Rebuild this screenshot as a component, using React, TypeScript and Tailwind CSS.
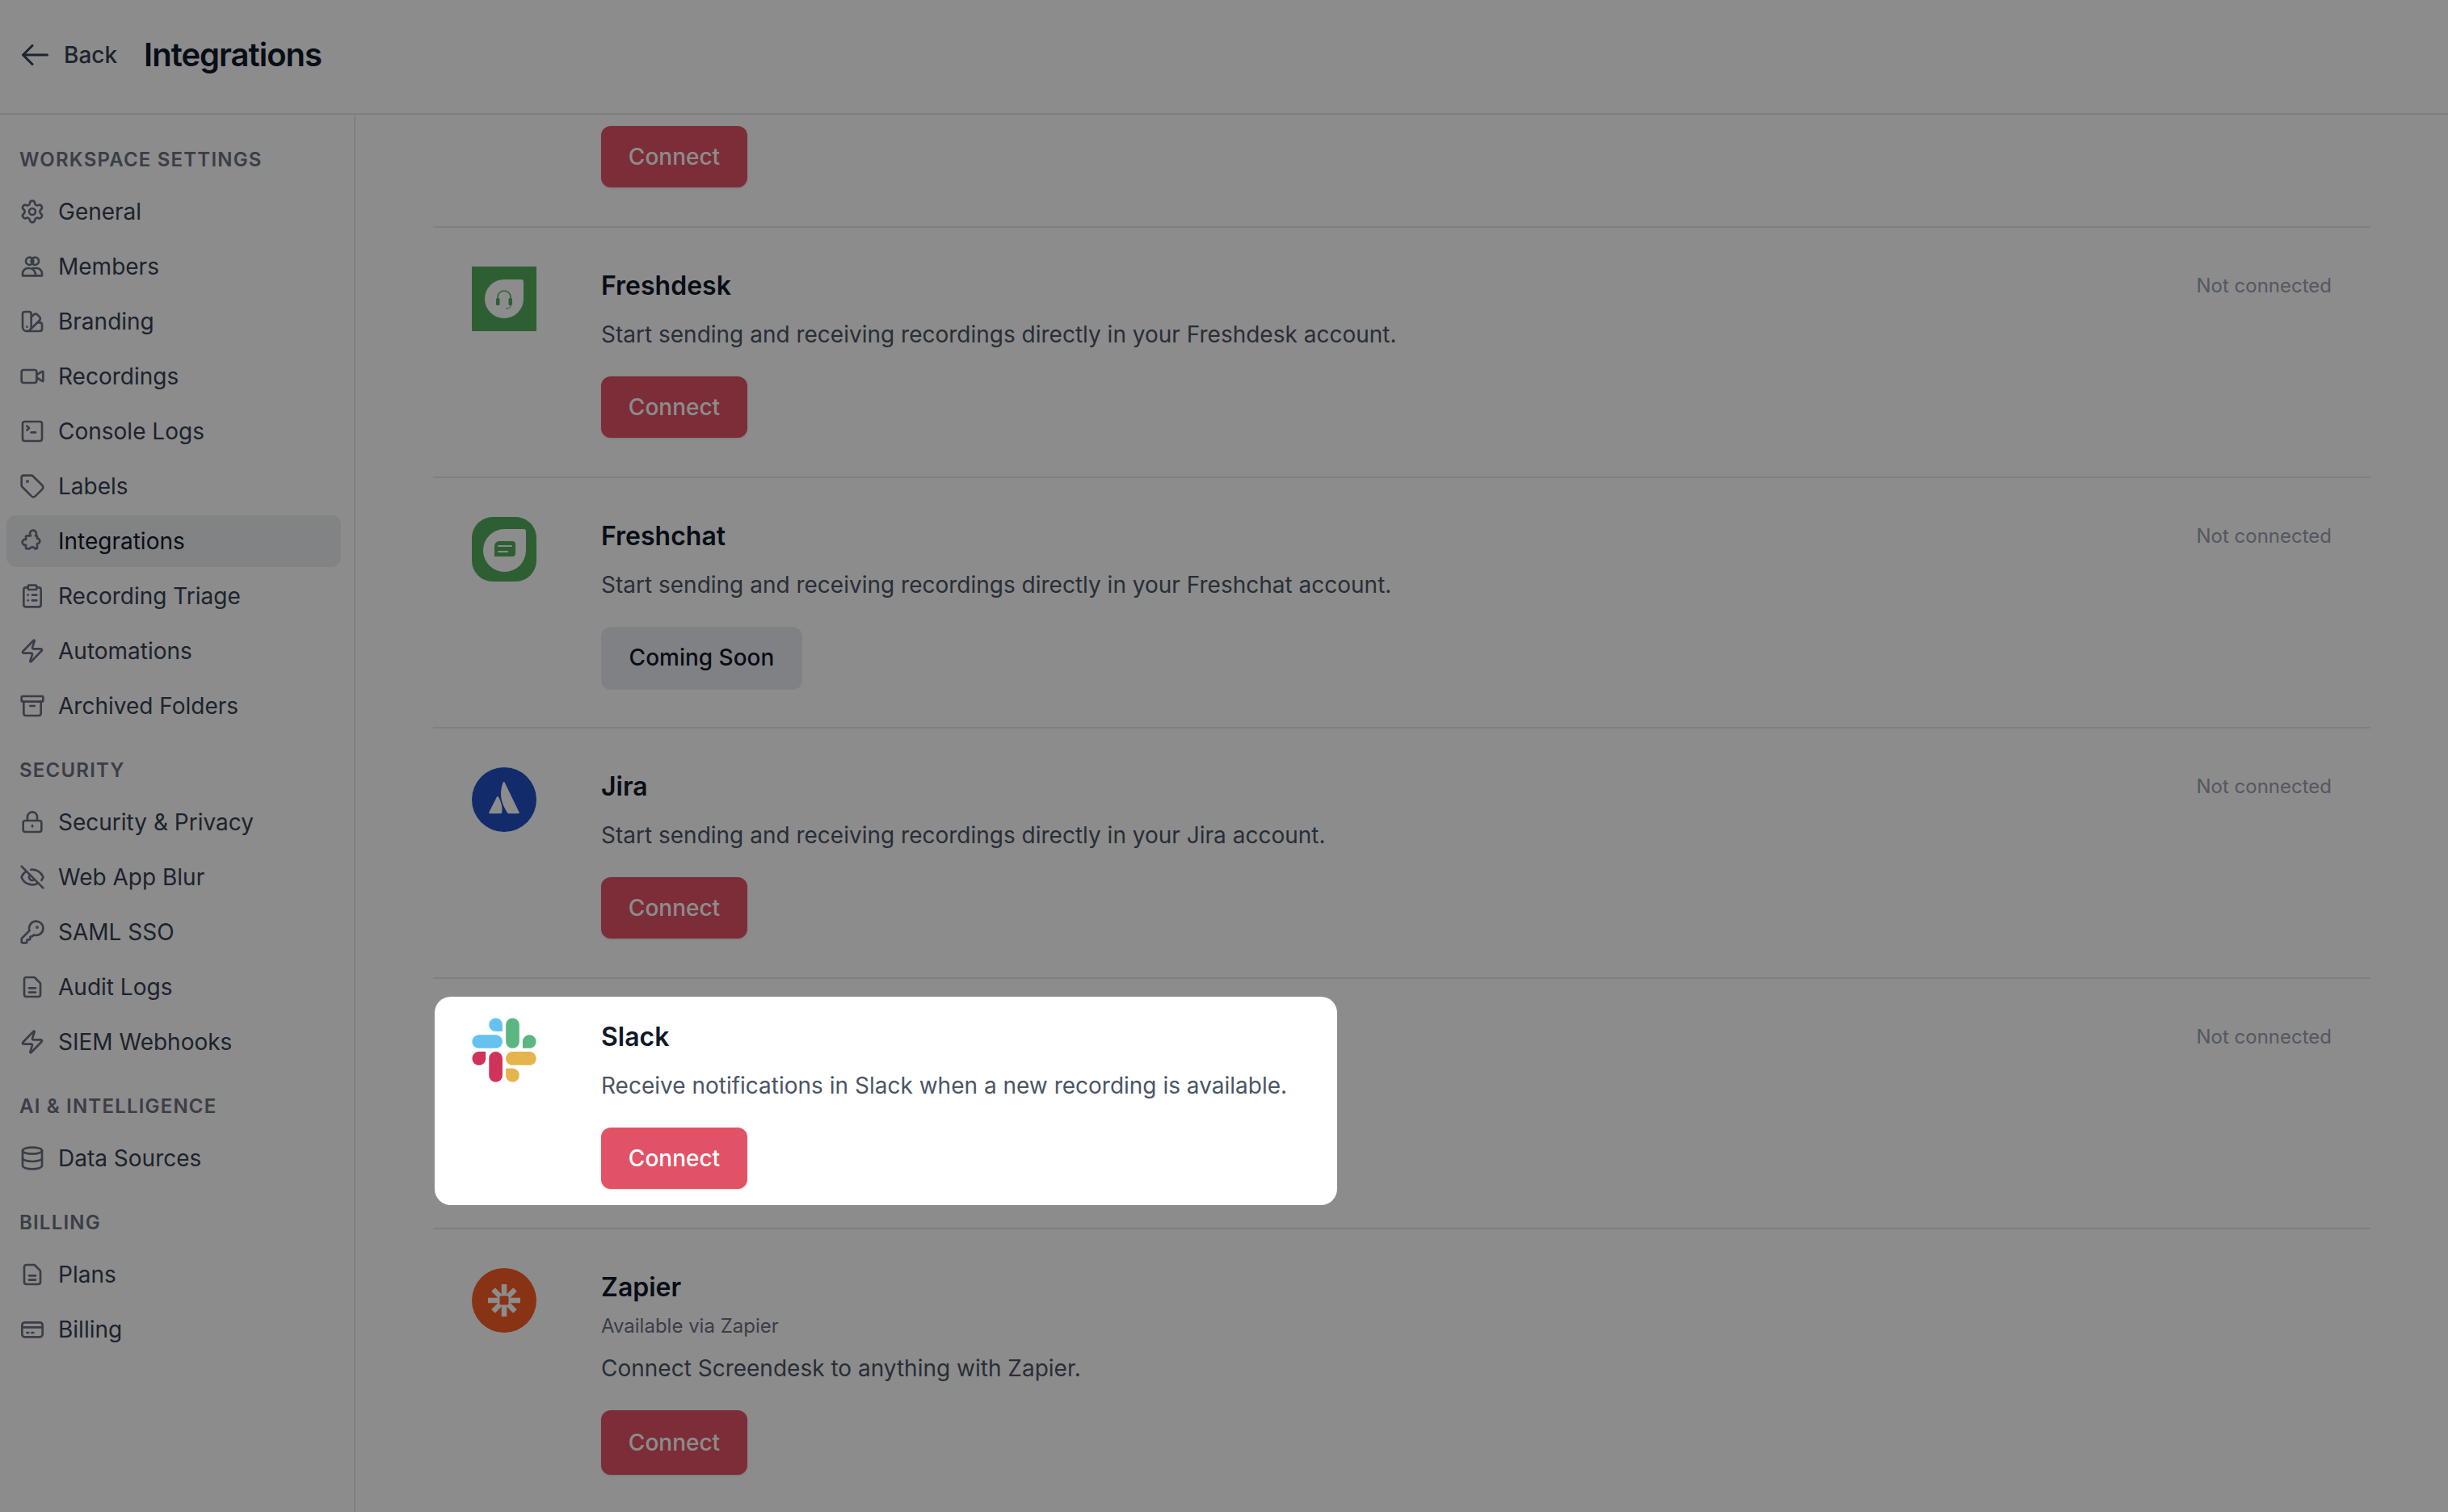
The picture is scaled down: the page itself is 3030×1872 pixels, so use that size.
import type { ReactNode } from "react";
import {
  Archive,
  ClipboardList,
  Database,
  EyeOff,
  Settings,
  SquareTerminal,
  SwatchBook,
  Tag,
  Video,
  Zap,
  KeyRound,
} from "lucide-react";

type IconProps = { className?: string };

const Svg = ({ className, children }: IconProps & { children: ReactNode }) => (
  <svg
    viewBox="0 0 24 24"
    fill="none"
    stroke="currentColor"
    strokeWidth="2"
    strokeLinecap="round"
    strokeLinejoin="round"
    className={className}
  >
    {children}
  </svg>
);

const MembersIcon = ({ className }: IconProps) => (
  <Svg className={className}>
    <circle cx="9.5" cy="7" r="3.5" />
    <circle cx="14.5" cy="7" r="3.5" />
    <path d="M3 20.500v-2a5 5 0 0 1 5-5h1a6 6 0 0 1 6 6v1z" />
    <path d="M15 20.500h6v-2a5 5 0 0 0-5-5h-3.500" />
  </Svg>
);

const PuzzleIcon = ({ className }: IconProps) => (
  <Svg className={className}>
    <path d="M7 7h3.500a3 3 0 1 1 4.500 0h.5a1 1 0 0 1 1 1v1.500a2.500 2.500 0 0 1 0 5V18a1 1 0 0 1-1 1h-1.200a2.500 2.500 0 0 0-4.600 0H7a1 1 0 0 1-1-1v-2.500a2.600 2.600 0 1 1 0-5V8a1 1 0 0 1 1-1z" />
  </Svg>
);

const LockIcon = ({ className }: IconProps) => (
  <Svg className={className}>
    <rect x="3.500" y="10.500" width="17" height="10.500" rx="2" />
    <path d="M7.500 10.500V7a4.500 4.500 0 0 1 9 0v3.500" />
    <path d="M12 15v1" />
  </Svg>
);

const FileIcon = ({ className }: IconProps) => (
  <Svg className={className}>
    <path d="M14 3H6.500A2 2 0 0 0 4.500 5v14a2 2 0 0 0 2 2h11a2 2 0 0 0 2-2V8.500z" />
    <path d="M9 13h6" />
    <path d="M9 17h6" />
  </Svg>
);

const CardIcon = ({ className }: IconProps) => (
  <Svg className={className}>
    <rect x="2.500" y="5.500" width="19" height="13.500" rx="2.500" />
    <path d="M2.500 10h19" />
    <path d="M7 15h1.500" />
    <path d="M11.500 15h1.500" />
  </Svg>
);

const sections = [
  {
    title: "Workspace Settings",
    items: [
      { label: "General", icon: Settings },
      { label: "Members", icon: MembersIcon },
      { label: "Branding", icon: SwatchBook },
      { label: "Recordings", icon: Video },
      { label: "Console Logs", icon: SquareTerminal },
      { label: "Labels", icon: Tag },
      { label: "Integrations", icon: PuzzleIcon, active: true },
      { label: "Recording Triage", icon: ClipboardList },
      { label: "Automations", icon: Zap },
      { label: "Archived Folders", icon: Archive },
    ],
  },
  {
    title: "Security",
    items: [
      { label: "Security & Privacy", icon: LockIcon },
      { label: "Web App Blur", icon: EyeOff },
      { label: "SAML SSO", icon: KeyRound },
      { label: "Audit Logs", icon: FileIcon },
      { label: "SIEM Webhooks", icon: Zap },
    ],
  },
  {
    title: "AI & Intelligence",
    items: [{ label: "Data Sources", icon: Database }],
  },
  {
    title: "Billing",
    items: [
      { label: "Plans", icon: FileIcon },
      { label: "Billing", icon: CardIcon },
    ],
  },
];

const FreshdeskLogo = () => (
  <svg viewBox="0 0 80 80" className="h-20 w-20">
    <rect width="80" height="80" fill="#52ad5e" />
    <path d="M40 16h21a3 3 0 0 1 3 3v21a24 24 0 1 1-24-24z" fill="#fff" />
    <path d="M32 44v-6a8 8 0 0 1 16 0v6" fill="none" stroke="#52ad5e" strokeWidth="1.500" />
    <rect x="30" y="39" width="4.500" height="9" rx="1.500" fill="#52ad5e" />
    <rect x="45.500" y="39" width="4.500" height="9" rx="1.500" fill="#52ad5e" />
    <path d="M48 48c0 3-2 4-6 4" fill="none" stroke="#52ad5e" strokeWidth="1" />
  </svg>
);

const FreshchatLogo = () => (
  <svg viewBox="0 0 80 80" className="h-20 w-20">
    <rect width="80" height="80" rx="26" fill="#52ad5e" />
    <path d="M40 15h24a3 3 0 0 1 3 3v24a26.500 26.500 0 1 1-27-27z" fill="#fff" />
    <path d="M34 30h16a4 4 0 0 1 4 4v11a4 4 0 0 1-4 4H28V36a6 6 0 0 1 6-6z" fill="#52ad5e" />
    <path d="M33 36h16" stroke="#fff" strokeWidth="2" strokeLinecap="round" />
    <path d="M33 43h11" stroke="#fff" strokeWidth="2" strokeLinecap="round" />
  </svg>
);

const JiraLogo = () => (
  <svg viewBox="0 0 80 80" className="h-20 w-20">
    <circle cx="40" cy="40" r="40" fill="#1f4fc4" />
    <path
      d="M38.500 19c.6-1.400 1.700-1.400 2.300 0l17.700 36.500c.5 1-.1 1.800-1.100 1.800H45.500c-.7 0-1.300-.4-1.600-1.100-3.500-7.300-12-17-5.400-37.200z"
      fill="#fff"
    />
    <path
      d="M31 36.500c.6-.8 1.500-.7 2 .2 2.200 4 5.500 11 4.200 19.400-.1.700-.7 1.200-1.400 1.200H22.500c-1 0-1.600-.9-1.100-1.800z"
      fill="#fff"
    />
  </svg>
);

const SlackLogo = () => (
  <svg viewBox="0 0 127 127" className="h-20 w-20">
    <path
      d="M27.200 80c0 7.300-5.900 13.200-13.200 13.200C6.700 93.200.800 87.300.800 80c0-7.300 5.900-13.200 13.200-13.200h13.200V80zm6.600 0c0-7.300 5.900-13.200 13.200-13.200 7.300 0 13.200 5.900 13.200 13.200v33c0 7.300-5.900 13.200-13.200 13.200-7.300 0-13.200-5.900-13.200-13.200V80z"
      fill="#cf3358"
    />
    <path
      d="M47 27c-7.300 0-13.200-5.900-13.200-13.200C33.800 6.500 39.700.600 47 .600c7.300 0 13.200 5.900 13.200 13.200V27H47zm0 6.700c7.300 0 13.200 5.900 13.200 13.200 0 7.300-5.900 13.200-13.200 13.200H13.900C6.600 60.100.700 54.200.700 46.900c0-7.300 5.900-13.200 13.200-13.200H47z"
      fill="#65c2f0"
    />
    <path
      d="M99.900 46.900c0-7.300 5.900-13.200 13.200-13.200 7.300 0 13.200 5.900 13.200 13.200 0 7.300-5.900 13.200-13.200 13.200H99.900V46.900zm-6.600 0c0 7.300-5.900 13.200-13.200 13.200-7.300 0-13.200-5.900-13.200-13.200V13.800C66.900 6.500 72.800.600 80.100.600c7.300 0 13.200 5.900 13.200 13.200v33.100z"
      fill="#5cb681"
    />
    <path
      d="M80.100 99.800c7.300 0 13.200 5.900 13.200 13.200 0 7.300-5.900 13.200-13.200 13.200-7.300 0-13.200-5.900-13.200-13.200V99.800h13.200zm0-6.600c-7.300 0-13.200-5.900-13.200-13.200 0-7.300 5.900-13.200 13.200-13.200h33.100c7.300 0 13.200 5.900 13.200 13.200 0 7.300-5.900 13.200-13.200 13.200H80.100z"
      fill="#e4b44d"
    />
  </svg>
);

const ZapierLogo = () => (
  <svg viewBox="0 0 80 80" className="h-20 w-20">
    <circle cx="40" cy="40" r="40" fill="#f75d26" />
    <g stroke="#fff" strokeWidth="6.500">
      <path d="M20 40h40" />
      <path d="M40 20v40" />
      <path d="M26.500 26.500l27 27" />
      <path d="M53.500 26.500l-27 27" />
    </g>
    <rect x="34.500" y="34.500" width="11" height="11" rx="1.500" fill="#f75d26" />
  </svg>
);

const rows = [
  {
    name: "Freshdesk",
    logo: <FreshdeskLogo />,
    text: "Start sending and receiving recordings directly in your Freshdesk account.",
    status: true,
  },
  {
    name: "Freshchat",
    logo: <FreshchatLogo />,
    text: "Start sending and receiving recordings directly in your Freshchat account.",
    status: true,
    soon: true,
  },
  {
    name: "Jira",
    logo: <JiraLogo />,
    text: "Start sending and receiving recordings directly in your Jira account.",
    status: true,
  },
  {
    name: "Slack",
    logo: <SlackLogo />,
    text: "Receive notifications in Slack when a new recording is available.",
    status: true,
  },
  {
    name: "Zapier",
    logo: <ZapierLogo />,
    sub: "Available via Zapier",
    text: "Connect Screendesk to anything with Zapier.",
    tall: true,
  },
];

const ConnectButton = ({ tall }: { tall?: boolean }) => (
  <button
    className={
      "w-[181px] rounded-xl bg-[#e25266] text-[28px] font-medium text-white shadow-sm " +
      (tall ? "h-20" : "h-[76px]")
    }
  >
    Connect
  </button>
);

export default function App() {
  return (
    <div className="relative flex h-[1872px] w-[3030px] flex-col overflow-hidden bg-white font-['Inter',sans-serif]">
      <header className="flex h-[142px] shrink-0 items-center border-b-2 border-gray-200 pb-[4px] pl-[27px]">
        <svg
          viewBox="0 0 33 26"
          fill="none"
          stroke="currentColor"
          strokeWidth="3"
          strokeLinecap="round"
          strokeLinejoin="round"
          className="h-[26px] w-[33px] text-gray-700"
        >
          <path d="M13 1.500L1.500 13 13 24.500" />
          <path d="M2 13h29.500" />
        </svg>
        <span className="ml-[19px] text-[28px] font-medium text-gray-700">Back</span>
        <h1 className="ml-[33px] text-[40px] font-semibold tracking-[-1px] text-gray-900">
          Integrations
        </h1>
      </header>

      <div className="flex min-h-0 flex-1">
        <aside className="flex w-[440px] shrink-0 flex-col gap-[30px] border-r-2 border-gray-200 pt-[38px] pr-4 pl-2">
          {sections.map((section) => (
            <section key={section.title}>
              <h2 className="mb-4 flex h-[34px] items-center px-4 pt-[2px] text-[24px] font-semibold uppercase tracking-[1.2px] text-gray-500">
                {section.title}
              </h2>
              <nav className="flex flex-col gap-1">
                {section.items.map((item) => {
                  const Icon = item.icon;
                  return (
                    <a
                      key={item.label}
                      className={
                        "flex h-16 items-center gap-4 rounded-xl px-4 text-[28px] " +
                        ("active" in item && item.active
                          ? "bg-[#eceef2] text-gray-900"
                          : "text-gray-700")
                      }
                    >
                      <Icon className="h-8 w-8 shrink-0 text-gray-500" />
                      {item.label}
                    </a>
                  );
                })}
              </nav>
            </section>
          ))}
        </aside>

        <main className="min-w-0 flex-1 overflow-hidden px-24">
          <div className="border-b-2 border-gray-200 pt-[14px] pb-12 pl-[208px]">
            <ConnectButton />
          </div>
          {rows.map((row) => (
            <div key={row.name} className="flex border-b-2 border-gray-200 px-12 pt-12 pb-12 last:border-b-0">
              <div className="w-40 shrink-0">{row.logo}</div>
              <div className="min-w-0 flex-1">
                <h3 className="text-[32px] leading-[48px] font-semibold text-gray-900">{row.name}</h3>
                {row.sub && (
                  <p className="mt-2 text-[24px] leading-8 text-gray-500">{row.sub}</p>
                )}
                <p className="mt-4 text-[28px] leading-10 text-gray-600">{row.text}</p>
                <div className="mt-8">
                  {row.soon ? (
                    <button className="-mb-[2px] block h-[78px] w-[249px] rounded-xl bg-[#e9ecf1] pb-[2px] text-[28px] font-medium text-gray-900">
                      Coming Soon
                    </button>
                  ) : (
                    <ConnectButton tall={row.tall} />
                  )}
                </div>
              </div>
              {row.status && (
                <span className="pt-[6px] text-[24px] leading-9 text-gray-400">Not connected</span>
              )}
            </div>
          ))}
        </main>
      </div>

      {/* tour spotlight: the spread shadow dims everything around the box */}
      <div className="pointer-events-none absolute top-[1234px] left-[538px] h-[258px] w-[1117px] rounded-[20px] shadow-[0_0_0_4000px_rgba(0,0,0,0.45)]" />
    </div>
  );
}
